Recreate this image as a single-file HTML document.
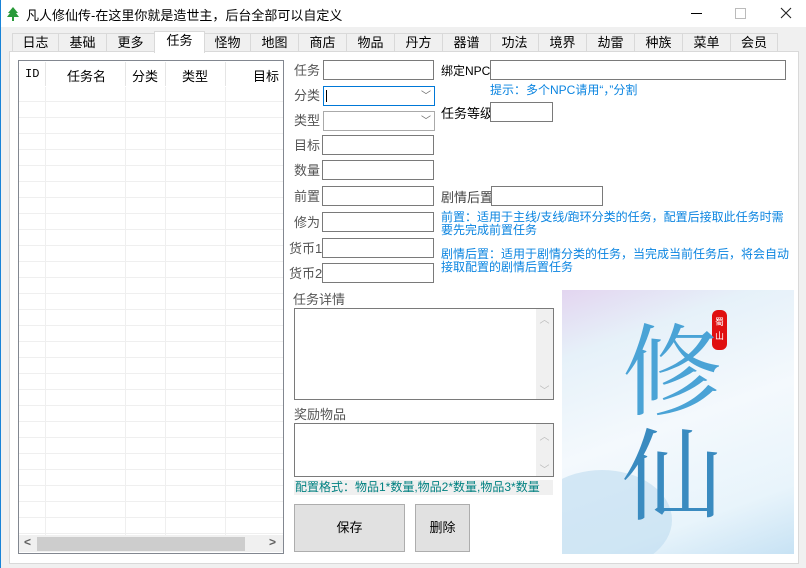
<!DOCTYPE html>
<html><head><meta charset="utf-8"><style>
*{margin:0;padding:0;box-sizing:border-box}
body{width:806px;height:568px;background:#f0f0f0;font-family:"Liberation Sans","Noto Sans CJK SC","WenQuanYi Zen Hei",sans-serif;font-size:13px;position:relative;overflow:hidden;color:#000}
.a{position:absolute}
.title{left:0;top:0;width:806px;height:27px;background:#fff;border-left:1px solid #1883d7}
.tab{position:absolute;top:33px;height:19px;border:1px solid #d9d9d9;border-bottom:none;background:#f0f0f0;text-align:center;font-size:13px;line-height:18px}
.panel{left:9px;top:51px;width:790px;height:513px;background:#fff;border:1px solid #d9d9d9}
.lbl{position:absolute;color:#555;font-size:13px;line-height:14px}
.inp{position:absolute;background:#fff;border:1px solid #7a7a7a;height:20px}
.blue{position:absolute;color:#0a84e0;font-size:12px;line-height:13px}
.btn{position:absolute;background:#e1e1e1;border:1px solid #adadad;text-align:center;font-size:13px}
.sb{position:absolute;right:0;top:0;bottom:0;width:17px;background:#f0f0f0;color:#bbb;font-size:10px;text-align:center}
</style></head><body>
<div class="a title"></div>
<div class="a" style="left:0;top:0;width:1px;height:568px;background:#1883d7"></div>
<svg class="a" style="left:7px;top:7px" width="12" height="14" viewBox="0 0 12 14"><path d="M6 0L1 6h2L0 10h5v4h2v-4h5L9 6h2z" fill="#2a9a3a"/></svg>
<div class="a" style="left:26px;top:5px;font-size:13px">凡人修仙传-在这里你就是造世主，后台全部可以自定义</div>
<div class="a" style="left:691px;top:13px;width:11px;height:1px;background:#000"></div>
<div class="a" style="left:735px;top:8px;width:11px;height:11px;border:1px solid #bbb"></div>
<svg class="a" style="left:780px;top:7px" width="12" height="12" viewBox="0 0 12 12"><path d="M1 1L11 11M11 1L1 11" stroke="#222" stroke-width="1.1"/></svg>

<div class="tab" style="left:12px;width:47px">日志</div>
<div class="tab" style="left:58px;width:49px">基础</div>
<div class="tab" style="left:106px;width:49px">更多</div>
<div class="tab" style="left:204px;width:47px">怪物</div>
<div class="tab" style="left:250px;width:49px">地图</div>
<div class="tab" style="left:298px;width:49px">商店</div>
<div class="tab" style="left:346px;width:49px">物品</div>
<div class="tab" style="left:394px;width:49px">丹方</div>
<div class="tab" style="left:442px;width:49px">器谱</div>
<div class="tab" style="left:490px;width:49px">功法</div>
<div class="tab" style="left:538px;width:49px">境界</div>
<div class="tab" style="left:586px;width:49px">劫雷</div>
<div class="tab" style="left:634px;width:49px">种族</div>
<div class="tab" style="left:682px;width:49px">菜单</div>
<div class="tab" style="left:730px;width:48px">会员</div>
<div class="a panel"></div>
<div class="tab" style="left:154px;top:31px;height:22px;width:51px;background:#fff;z-index:2;line-height:18px">任务</div>

<!-- list -->
<div class="a" style="left:18px;top:60px;width:266px;height:494px;border:1px solid #828790;background:#fff;overflow:hidden">
<svg width="264" height="492" style="position:absolute;left:0;top:0">
<g stroke="#efefef" stroke-width="1">
<line x1="26.5" y1="0" x2="26.5" y2="475"/><line x1="106.5" y1="0" x2="106.5" y2="475"/><line x1="146.5" y1="0" x2="146.5" y2="475"/><line x1="206.5" y1="0" x2="206.5" y2="475"/>
</g>
<g stroke="#efefef">
<line x1="0" y1="40.5" x2="264" y2="40.5"/><line x1="0" y1="56.5" x2="264" y2="56.5"/><line x1="0" y1="72.5" x2="264" y2="72.5"/><line x1="0" y1="88.5" x2="264" y2="88.5"/><line x1="0" y1="104.5" x2="264" y2="104.5"/><line x1="0" y1="120.5" x2="264" y2="120.5"/><line x1="0" y1="136.5" x2="264" y2="136.5"/><line x1="0" y1="152.5" x2="264" y2="152.5"/><line x1="0" y1="168.5" x2="264" y2="168.5"/><line x1="0" y1="184.5" x2="264" y2="184.5"/><line x1="0" y1="200.5" x2="264" y2="200.5"/><line x1="0" y1="216.5" x2="264" y2="216.5"/><line x1="0" y1="232.5" x2="264" y2="232.5"/><line x1="0" y1="248.5" x2="264" y2="248.5"/><line x1="0" y1="264.5" x2="264" y2="264.5"/><line x1="0" y1="280.5" x2="264" y2="280.5"/><line x1="0" y1="296.5" x2="264" y2="296.5"/><line x1="0" y1="312.5" x2="264" y2="312.5"/><line x1="0" y1="328.5" x2="264" y2="328.5"/><line x1="0" y1="344.5" x2="264" y2="344.5"/><line x1="0" y1="360.5" x2="264" y2="360.5"/><line x1="0" y1="376.5" x2="264" y2="376.5"/><line x1="0" y1="392.5" x2="264" y2="392.5"/><line x1="0" y1="408.5" x2="264" y2="408.5"/><line x1="0" y1="424.5" x2="264" y2="424.5"/><line x1="0" y1="440.5" x2="264" y2="440.5"/><line x1="0" y1="456.5" x2="264" y2="456.5"/><line x1="0" y1="472.5" x2="264" y2="472.5"/>
</g></svg>
<div class="a" style="left:0;top:0;width:264px;height:26px;background:#fff"></div>
<div class="a" style="left:26px;top:1px;width:1px;height:24px;background:#e5e5e5"></div>
<div class="a" style="left:106px;top:1px;width:1px;height:24px;background:#e5e5e5"></div>
<div class="a" style="left:146px;top:1px;width:1px;height:24px;background:#e5e5e5"></div>
<div class="a" style="left:206px;top:1px;width:1px;height:24px;background:#e5e5e5"></div>
<div class="a" style="left:6px;top:6px;font-size:12px;font-family:'Liberation Mono',monospace">ID</div>
<div class="a" style="left:48px;top:5px">任务名</div>
<div class="a" style="left:113px;top:5px">分类</div>
<div class="a" style="left:163px;top:5px">类型</div>
<div class="a" style="left:234px;top:5px">目标</div>
<div class="a" style="left:0;top:474px;width:264px;height:17px;background:#f0f0f0"></div>
<div class="a" style="left:18px;top:476px;width:208px;height:14px;background:#cdcdcd"></div>
<div class="a" style="left:5px;top:474px;color:#606060;font-size:12px;font-weight:bold">&lt;</div>
<div class="a" style="left:250px;top:474px;color:#606060;font-size:12px;font-weight:bold">&gt;</div>
</div>

<!-- form left -->
<div class="lbl" style="left:294px;top:64px">任务</div><div class="inp" style="left:323px;top:60px;width:111px"></div>
<div class="lbl" style="left:294px;top:89px">分类</div><div class="inp" style="left:323px;top:86px;width:112px;border-color:#0078d7"><div class="a" style="left:2px;top:3px;width:1px;height:12px;background:#000"></div><div class="a" style="right:3px;top:0;color:#666;font-size:10px">﹀</div></div>
<div class="lbl" style="left:294px;top:114px">类型</div><div class="inp" style="left:323px;top:111px;width:112px;border-color:#aaa"><div class="a" style="right:3px;top:0;color:#666;font-size:10px">﹀</div></div>
<div class="lbl" style="left:294px;top:139px">目标</div><div class="inp" style="left:322px;top:135px;width:112px"></div>
<div class="lbl" style="left:294px;top:164px">数量</div><div class="inp" style="left:322px;top:160px;width:112px"></div>
<div class="lbl" style="left:294px;top:190px">前置</div><div class="inp" style="left:322px;top:186px;width:112px"></div>
<div class="lbl" style="left:294px;top:216px">修为</div><div class="inp" style="left:322px;top:212px;width:112px"></div>
<div class="lbl" style="left:289px;top:242px">货币1</div><div class="inp" style="left:322px;top:238px;width:112px"></div>
<div class="lbl" style="left:289px;top:267px">货币2</div><div class="inp" style="left:322px;top:263px;width:112px"></div>

<!-- right -->
<div class="a" style="left:441px;top:62px;font-size:12px">绑定NPC</div><div class="inp" style="left:490px;top:60px;width:296px"></div>
<div class="blue" style="left:490px;top:84px">提示：多个NPC请用“，”分割</div>
<div class="a" style="left:441px;top:103px;font-size:13px">任务等级</div><div class="inp" style="left:490px;top:102px;width:63px"></div>
<div class="a" style="left:441px;top:187px;color:#444">剧情后置</div><div class="inp" style="left:491px;top:186px;width:112px"></div>
<div class="blue" style="left:441px;top:211px;width:350px">前置：适用于主线/支线/跑环分类的任务，配置后接取此任务时需<br>要先完成前置任务</div>
<div class="blue" style="left:441px;top:248px;width:350px">剧情后置：适用于剧情分类的任务，当完成当前任务后，将会自动<br>接取配置的剧情后置任务</div>

<div class="lbl" style="left:293px;top:293px">任务详情</div>
<div class="inp" style="left:294px;top:308px;width:260px;height:92px"><div class="sb"><div style="margin-top:2px">︿</div><div style="margin-top:56px">﹀</div></div></div>
<div class="lbl" style="left:294px;top:408px">奖励物品</div>
<div class="inp" style="left:294px;top:423px;width:260px;height:54px"><div class="sb"><div style="margin-top:4px">︿</div><div style="margin-top:18px">﹀</div></div></div>
<div class="a" style="left:294px;top:480px;width:259px;height:15px;background:#f0f0f0;color:#008080;font-size:12px;line-height:14px;padding-left:1px">配置格式：物品1*数量,物品2*数量,物品3*数量</div>
<div class="btn" style="left:294px;top:504px;width:111px;height:48px;line-height:46px">保存</div>
<div class="btn" style="left:415px;top:504px;width:55px;height:48px;line-height:46px">删除</div>

<!-- image -->
<div class="a" style="left:562px;top:290px;width:232px;height:264px;overflow:hidden;background:linear-gradient(160deg,#e3d5f0 0%,#e6f1f9 20%,#f4f9fd 50%,#e8f4fb 80%,#c7e2f4 100%)">
<div class="a" style="left:-30px;top:180px;width:140px;height:100px;border-radius:50%;background:rgba(190,220,240,.6)"></div>
<div class="a" style="left:150px;top:20px;width:15px;height:40px;border-radius:6px;background:#e01010;color:#fff;font-size:9px;line-height:14px;text-align:center;padding-top:5px">蜀<br>山</div>
<div class="a" style="left:60px;top:22px;font-size:100px;line-height:105px;color:#4aa3d6;font-family:'Noto Serif CJK SC',serif;font-weight:normal">修<br><span style="color:#3a8bc0">仙</span></div>
</div>
</body></html>
